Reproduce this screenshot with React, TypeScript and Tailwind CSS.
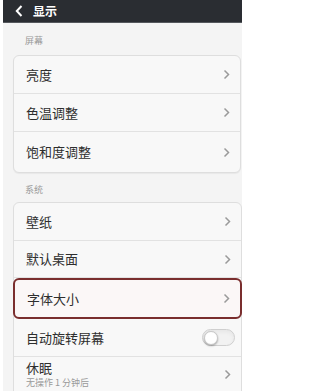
import React from "react";

const font = { fontFamily: '"Noto Sans CJK SC", "Noto Sans", sans-serif' };

function Chevron() {
  return (
    <svg width="7" height="11" viewBox="0 0 7 11" className="shrink-0">
      <path d="M1.5 1.5 L5.5 5.5 L1.5 9.5" fill="none" stroke="#9a9a9a" strokeWidth="1.5" />
    </svg>
  );
}

function Row({ label, last, h = "h-[38px]" }: { label: string; last?: boolean; h?: string }) {
  return (
    <div className={`flex ${h} items-center justify-between pl-[12px] pr-[10px] ${last ? "" : "border-b border-[#e2e2e2]"}`}>
      <span className="text-[13px] leading-[16px] text-[#2e2e2e]">{label}</span>
      <Chevron />
    </div>
  );
}

export default function App() {
  return (
    <div className="w-[242px] h-[391px] overflow-hidden bg-white pl-[3px]" style={font}>
      <div className="h-full bg-[#f4f4f4] flex flex-col">
        <div className="h-[23px] bg-[#2a2d32] border-b border-[#55585d] flex items-center pl-[12px] gap-[10px] shrink-0">
          <svg width="8" height="12" viewBox="0 0 8 12">
            <path d="M6.5 1 L1.8 6 L6.5 11" fill="none" stroke="#ffffff" strokeWidth="2" />
          </svg>
          <span className="text-[12px] font-bold text-white leading-none">显示</span>
        </div>
        <div className="pl-[10px] pr-[1px]">
          <div className="h-[32px] flex items-center pl-[12px] pt-[4px] text-[9px] text-[#9a9a9a]">屏幕</div>
          <div className="rounded-[6px] border border-[#dedede] bg-[#f8f8f8] shadow-[0_1px_1px_rgba(0,0,0,0.05)]">
            <Row label="亮度" />
            <Row label="色温调整" />
            <Row label="饱和度调整" last h="h-[40px]" />
          </div>
          <div className="h-[29px] flex items-center pl-[12px] pt-[5px] text-[9px] text-[#9a9a9a]">系统</div>
          <div className="rounded-[6px] border border-[#dedede] bg-[#f8f8f8] mr-[-1px]">
            <Row label="壁纸" />
            <Row label="默认桌面" h="h-[37px]" />
            <div className="flex h-[41px] items-center justify-between pl-[12px] pr-[10px] rounded-[6px] border-2 border-[#7a2e2e] bg-[#fbf7f7] mx-[-1px]">
              <span className="text-[13px] leading-[16px] text-[#2e2e2e]">字体大小</span>
              <Chevron />
            </div>
            <div className="flex h-[38px] items-center justify-between pl-[12px] pr-[6px] border-b border-[#e2e2e2]">
              <span className="text-[13px] leading-[16px] text-[#2e2e2e]">自动旋转屏幕</span>
              <div className="w-[33px] h-[17px] rounded-full border border-[#cfcfcf] bg-[#f2f2f2] flex items-center pl-[1px] shadow-inner">
                <div className="w-[14px] h-[14px] rounded-full bg-white border border-[#c8c8c8] shadow-[0_1px_2px_rgba(0,0,0,0.3)]" />
              </div>
            </div>
            <div className="flex h-[40px] items-start justify-between pl-[12px] pr-[10px] pt-[4px]">
              <div className="flex flex-col gap-[2px]">
                <span className="text-[13px] leading-[14px] text-[#2e2e2e]">休眠</span>
                <span className="text-[9px] leading-[11px] text-[#9a9a9a]">无操作 1 分钟后</span>
              </div>
              <div className="pt-[8px]"><Chevron /></div>
            </div>
          </div>
        </div>
      </div>
    </div>
  );
}
